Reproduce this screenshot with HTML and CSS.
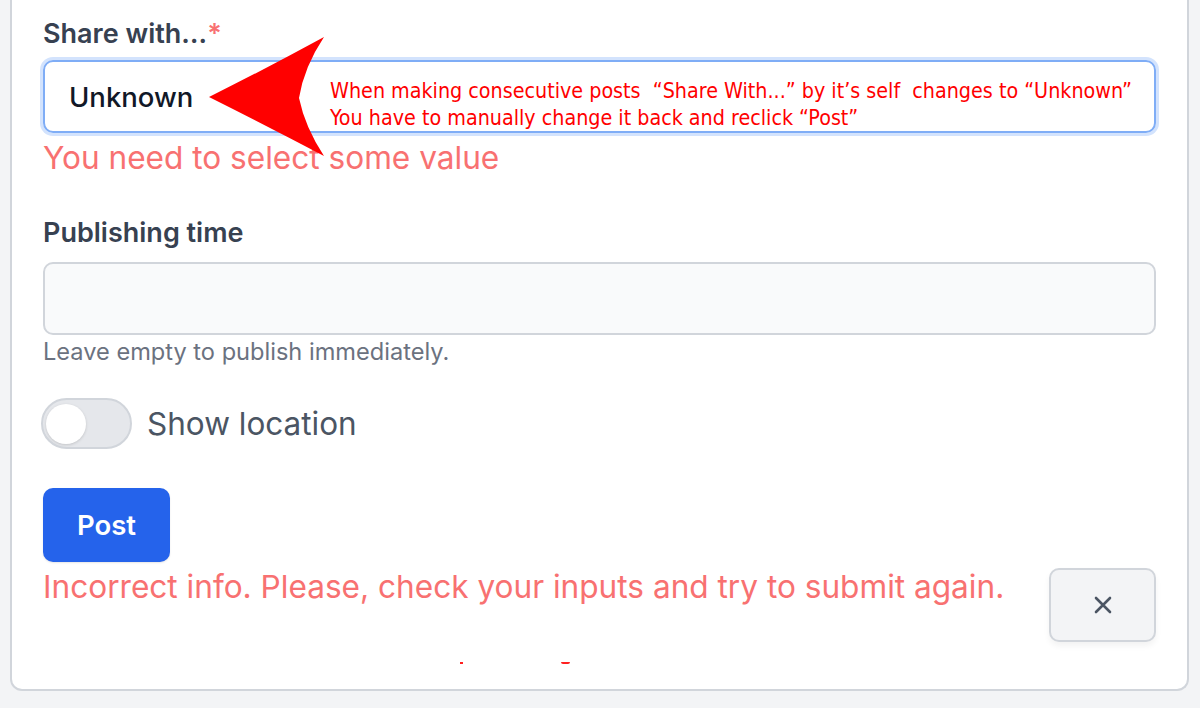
FILE: index.html
```html
<!DOCTYPE html>
<html lang="en">
<head>
<meta charset="utf-8">
<title>Share form</title>
<link rel="stylesheet" href="styles.css">
</head>
<body>
<div class="page">
  <form class="card">
    <div class="field">
      <label class="label label-first">Share with…<span class="req">*</span></label>
      <div class="select focus">Unknown</div>
      <p class="error">You need to select some value</p>
    </div>
    <div class="field field-gap">
      <label class="label">Publishing time</label>
      <div class="input"></div>
      <p class="help">Leave empty to publish immediately.</p>
    </div>
    <div class="toggle-row">
      <span class="toggle"><span class="knob"></span></span>
      <span class="toggle-label">Show location</span>
    </div>
    <button type="button" class="btn-post">Post</button>
    <div class="submit-row">
      <p class="error error-submit">Incorrect info. Please, check your inputs and try to submit again.</p>
      <button type="button" class="btn-close" aria-label="Close">
        <svg width="22" height="22" viewBox="0 0 22 22"><path d="M4 4 L18 18 M18 4 L4 18" stroke="#4b5563" stroke-width="2.6" stroke-linecap="round"/></svg>
      </button>
    </div>
  </form>
  <div class="annotation">
    <svg class="arrow" width="130" height="130" viewBox="0 0 130 130"><path d="M0 60 Q60 30 115 0 Q95 30 90 61 Q96 90 115 119 Q60 90 0 60 Z" fill="#ff0000"/></svg>
    <div class="note">When making consecutive posts &nbsp;“Share With...” by it’s self &nbsp;changes to “Unknown”<br>You have to manually change it back and reclick “Post”</div>
    <span class="mark mark1"></span>
    <span class="mark mark2"></span>
  </div>
</div>
</body>
</html>
```

FILE: styles.css
```css
* { box-sizing: border-box; }
html, body { margin: 0; padding: 0; }
body {
  background: #f3f4f6;
  font-family: Inter, "Liberation Sans", sans-serif;
  width: 1200px;
  height: 708px;
  overflow: hidden;
}
.page {
  position: relative;
  padding: 0 11px 0 10px;
}
.card {
  display: flex;
  flex-direction: column;
  align-items: flex-start;
  background: #fff;
  border: 2px solid #d1d5db;
  border-top: none;
  border-radius: 0 0 12px 12px;
  padding: 18px 31px 47px 31px;
  width: 1179px;
}
.field { width: 100%; display: flex; flex-direction: column; }
.field-gap { margin-top: 39px; }
.label {
  font-size: 27px;
  line-height: 32px;
  font-weight: 600;
  color: #374151;
  margin-bottom: 13px;
}
.label-first { margin-bottom: 10px; }
.req { color: #f87171; }
.select, .input {
  width: 100%;
  height: 73px;
  border-radius: 10px;
}
.select {
  border: 2px solid #7fadf6;
  box-shadow: 0 0 0 3px #d3e3fd;
  display: flex;
  align-items: center;
  padding-left: 24px;
  font-size: 27.5px;
  font-weight: 500;
  color: #111827;
}
.input {
  border: 2px solid #d1d5db;
  background: #f9fafb;
}
.error {
  margin: 5px 0 0;
  font-size: 31.6px;
  line-height: 40px;
  color: #f87171;
}
.help {
  margin: 3px 0 0;
  font-size: 23.6px;
  line-height: 28px;
  color: #6b7280;
}
.toggle-row {
  margin-top: 32px;
  display: flex;
  align-items: center;
  gap: 15px;
}
.toggle {
  display: flex;
  align-items: center;
  width: 91px;
  height: 51px;
  border-radius: 26px;
  background: #e5e7eb;
  border: 2px solid #d1d5db;
  padding: 3px;
  margin-left: -2px;
}
.knob {
  width: 40px;
  height: 40px;
  border-radius: 50%;
  background: #fff;
  box-shadow: 0 1px 3px rgba(0,0,0,0.15);
}
.toggle-label {
  font-size: 31.5px;
  color: #4b5563;
}
.btn-post {
  margin-top: 39px;
  width: 127px;
  height: 74px;
  border: none;
  border-radius: 10px;
  background: #2563eb;
  color: #fff;
  font-family: inherit;
  font-size: 27.5px;
  font-weight: 600;
  box-shadow: 0 1px 2px rgba(0,0,0,0.1);
}
.submit-row {
  width: 100%;
  display: flex;
  justify-content: space-between;
  align-items: flex-start;
  margin-top: 5px;
}
.error-submit { margin: 0; }
.btn-close {
  width: 107px;
  height: 74px;
  margin-top: 1px;
  background: #f3f4f6;
  border: 2px solid #d1d5db;
  border-radius: 10px;
  display: flex;
  align-items: center;
  justify-content: center;
  box-shadow: 0 4px 6px rgba(0,0,0,0.05);
}
.annotation {
  position: absolute;
  left: 0;
  top: 0;
  width: 1200px;
  height: 708px;
  pointer-events: none;
}
.arrow {
  position: absolute;
  left: 209px;
  top: 37px;
}
.note {
  position: absolute;
  left: 330px;
  top: 77px;
  font-family: "Liberation Sans Narrow", "DejaVu Sans Condensed", sans-serif;
  font-size: 21.3px;
  line-height: 27px;
  color: #ff0000;
  white-space: nowrap;
}
.mark {
  position: absolute;
  background: #ff2020;
  height: 2px;
  top: 662px;
}
.mark1 { left: 460px; width: 3px; }
.mark2 { left: 561px; width: 9px; border-radius: 0 0 4px 4px; }
```
